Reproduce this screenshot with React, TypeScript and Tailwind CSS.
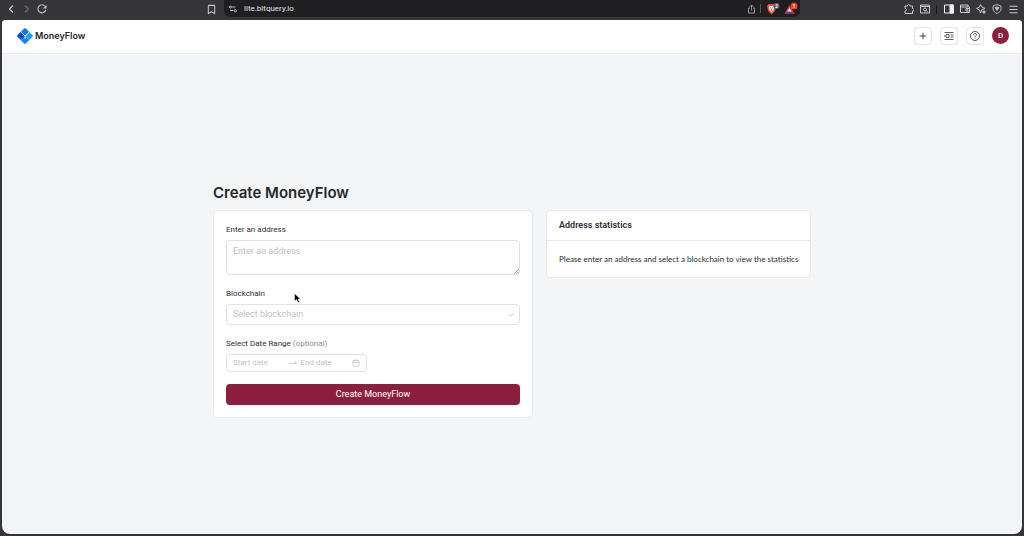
import { useState } from "react";
import type { ReactNode } from "react";
import { Bookmark, Calendar, ChevronDown, ChevronLeft, ChevronRight, Menu, Plus } from "lucide-react";

const Separator = ({ className = "" }: { className?: string }) => (
  <span className={`h-[9px] w-px ${className}`} />
);

const BrowserBar = () => {
  return <div className="grid grid-cols-[1fr_minmax(0,576px)_1fr] h-[19px] bg-[#363638] text-[#c9c9cb]">
    <div className="flex items-center pl-[5px] pr-[7px] pb-px gap-1">
      <button aria-label="Back"><ChevronLeft size={12} strokeWidth={2.6} /></button>
      <button aria-label="Forward" className="text-[#707073]"><ChevronRight size={12} strokeWidth={2.6} /></button>
      <button aria-label="Reload">
        <svg width="10" height="10" viewBox="0 0 20 20" fill="none" stroke="currentColor" strokeWidth="2.2">
          <path d="M17.500 12A8 8 0 1 1 16 4.500" />
          <path d="M19 2v7h-7z" fill="currentColor" stroke="none" />
        </svg>
      </button>
      <button aria-label="Bookmark" className="ml-auto"><Bookmark size={11} strokeWidth={2.2} /></button>
    </div>

    <div className="flex items-center h-[17px] mb-auto pl-1 pr-[2px] bg-[#1f1f21] rounded-b-md">
      <svg className="ml-px" width="8" height="8" viewBox="0 0 16 16" fill="none" stroke="currentColor" strokeWidth="1.8">
        <circle cx="3" cy="4" r="2" />
        <path d="M6 4h7M2 11h6" />
        <circle cx="12.500" cy="11.500" r="2.300" />
      </svg>
      <input
        aria-label="Address bar"
        className="flex-1 min-w-0 ml-[7px] bg-transparent outline-none text-[8px] leading-[12px] text-[#e4e4e6]"
        defaultValue="lite.bitquery.io"
      />
      <button aria-label="Share">
        <svg width="9" height="10" viewBox="0 0 18 20" fill="none" stroke="#a6a6a8" strokeWidth="1.800">
          <path d="M6 8H3v10h12V8h-3M9 13V2M5.500 5.500 9 2l3.500 3.500" />
        </svg>
      </button>
      <Separator className="mx-1 bg-[#59595c]" />
      <button aria-label="Shields" className="ml-px">
        <svg width="14" height="13" viewBox="0 0 28 26">
          <path d="M5 4h12l3 4-2 10-7 7-7-7-2-10z" fill="#f4512c" />
          <path d="m6 9 3-1h4l3 1-1 7-4 5-4-5z" fill="#fff" />
          <path d="m8 11 3 2 3-2M11 14v4" stroke="#f4512c" strokeWidth="1.600" fill="none" />
          <circle cx="21" cy="8" r="6" fill="#596273" />
          <text x="21" y="11.500" textAnchor="middle" fontSize="9" fontWeight="700" fill="#fff">2</text>
        </svg>
      </button>
      <button aria-label="Rewards" className="ml-1">
        <svg width="14" height="13" viewBox="0 0 28 26">
          <path d="M11 6 1 24h20z" fill="#e8442c" />
          <path d="m11 17-10 7h20z" fill="#6a3894" />
          <path d="m11 12-4 7h8z" fill="#fff" />
          <circle cx="20" cy="8" r="7" fill="#f23d2b" />
          <text x="20" y="11.500" textAnchor="middle" fontSize="10" fontWeight="700" fill="#fff">1</text>
        </svg>
      </button>
    </div>

    <div className="flex items-center justify-end gap-[6px] pr-[5px] pb-px">
      <button aria-label="Extensions">
        <svg width="10" height="10" viewBox="0 0 20 20" fill="none" stroke="currentColor" strokeWidth="2">
          <path d="M2 4h5c0-4 5-4 5 0h5v5c4 0 4 5 0 5v5H2v-5c4 0 4-5 0-5z" strokeLinejoin="round" />
        </svg>
      </button>
      <button aria-label="Search tabs">
        <svg width="10" height="10" viewBox="0 0 20 20" fill="none" stroke="currentColor" strokeWidth="2">
          <path d="M1 2h18v16H1zM1 5h18" />
          <circle cx="10" cy="11" r="3" />
          <path d="m12 13 3 3" />
        </svg>
      </button>
      <Separator className="bg-[#18181a] mr-px" />
      <button aria-label="Side panel">
        <svg width="10" height="10" viewBox="0 0 20 20" fill="none" stroke="#f0f0f0" strokeWidth="2">
          <path d="M1 2h18v16H1z" />
          <path d="M12 2h7v16h-7z" fill="#f0f0f0" />
        </svg>
      </button>
      <button aria-label="Wallet">
        <svg width="10" height="10" viewBox="0 0 20 20" fill="none" stroke="currentColor" strokeWidth="2">
          <path d="M16 6V2H1v15h18V6H1M19 9h-7v5h7" />
          <path d="M14 11.500h2" />
        </svg>
      </button>
      <button aria-label="Assistant">
        <svg width="10" height="10" viewBox="0 0 20 20" fill="none" stroke="currentColor" strokeWidth="2" strokeLinejoin="round">
          <path d="m9 1 3 5 6 3-6 2-3 7-2-6-6-3 6-3z" />
          <path d="m16 13 1 2 2 1-2 1-1 2-1-2-2-1 2-1z" fill="currentColor" />
        </svg>
      </button>
      <button aria-label="VPN">
        <svg width="10" height="10" viewBox="0 0 20 20" fill="none" stroke="currentColor" strokeWidth="1.800">
          <path d="M10 1 18 4v6c0 4-4 7-8 9-4-2-8-5-8-9V4z" />
          <path d="m5 7 5-2 5 2-5 7z" fill="currentColor" stroke="none" />
        </svg>
      </button>
      <button aria-label="Menu"><Menu size={11} strokeWidth={2.4} /></button>
    </div>
  </div>
};

const Logo = () => (
  <svg width="16" height="16" viewBox="0 0 48 48">
    <path d="M22 1q2-1 4 0l10 10-12 13L11 12z" fill="#1478f2" />
    <path d="M11 11 24 24v4L12 36 1 26q-1-2 0-4z" fill="#0a4fdc" />
    <path d="M36 11l11 11q1 2 0 4L36 37 24 24z" fill="#1da4fa" />
    <path d="M24 24l12 13-10 10q-2 1-4 0L11 36z" fill="#1583f5" />
    <path d="m11 11 13 13v9M24 24l12-11" fill="none" stroke="#fff" strokeWidth="2.600" />
  </svg>
);

const IconButton = ({ label, children }: { label: string; children: ReactNode }) => (
  <button aria-label={label} className="flex items-center justify-center size-[18px] border border-[#dfe2e7] rounded-[4px] bg-white text-[#333740]">
    {children}
  </button>
);

const AppBar = () => {
  return <header className="flex items-center justify-between h-[34px] pl-[15px] pr-[13px] pb-[2px] bg-white border-b border-[#e7eaee]">
    <a href="#" className="flex items-center gap-[2px] font-[Inter,sans-serif] text-[9px] leading-[14px] font-semibold text-[#22262b]">
      <Logo />
      MoneyFlow
    </a>
    <div className="flex items-center gap-2">
      <IconButton label="Create"><Plus size={10} strokeWidth={2.2} /></IconButton>
      <IconButton label="Saved flows">
        <svg width="10" height="8" viewBox="0 0 20 16" fill="none" stroke="currentColor" strokeWidth="1.600">
          <path d="M1 1h18M1 15h18M13 6h6M13 10h6M0 8h3" />
          <path d="M4 5h6v6H4z" />
        </svg>
      </IconButton>
      <IconButton label="Help">
        <svg width="10" height="10" viewBox="0 0 20 20" fill="none" stroke="currentColor" strokeWidth="1.700">
          <circle cx="10" cy="10" r="9" />
          <path d="M7 8c0-4 6-4 6-.5 0 2-3 2.500-3 4.500M10 13.500v2" />
        </svg>
      </IconButton>
      <button aria-label="Account" className="size-[17px] rounded-full bg-[#8c1f40] text-white text-[8px] font-medium leading-none">D</button>
    </div>
  </header>
};

const field = "w-full bg-white border border-[#dfe3e8] rounded-[4px] outline-none placeholder:text-[#bfc0c2]";
const label = "text-[8px] leading-[13px] text-[#2b2e33]";

const CreateForm = () => {
  const [chain, setChain] = useState("");

  return <form className="flex flex-col gap-3 p-3 bg-white border border-[#e7e9ed] rounded-[5px]" onSubmit={(e) => e.preventDefault()}>
    <div className="flex flex-col gap-1">
      <label htmlFor="address" className={label}>Enter an address</label>
      <div className="relative">
        <textarea id="address" placeholder="Enter an address" className={`${field} block h-[35px] px-[6px] py-1 text-[9px] leading-[13px] resize-none`} />
        <svg className="absolute right-px bottom-px" width="5" height="5" viewBox="0 0 10 10" stroke="#85878a" strokeWidth="1.600">
          <path d="M0 10 10 0M5 10l5-5" />
        </svg>
      </div>
    </div>

    <div className="flex flex-col gap-1">
      <label htmlFor="chain" className={label}>Blockchain</label>
      <div className="relative">
        <select
          id="chain"
          value={chain}
          onChange={(e) => setChain(e.target.value)}
          className={`${field} block h-[21px] px-[6px] text-[9px] leading-[13px] appearance-none ${chain ? "text-[#2b2e33]" : "text-[#bfc0c2]"}`}
        >
          <option value="">Select blockchain</option>
          <option value="bitcoin">Bitcoin</option>
          <option value="ethereum">Ethereum</option>
        </select>
        <ChevronDown size={10} className="absolute right-1 top-[6px] text-[#bfc0c2] pointer-events-none" />
      </div>
    </div>

    <div className="flex flex-col gap-1">
      <label htmlFor="start" className={label}>Select Date Range <span className="text-[#8b8d91]">(optional)</span></label>
      <div className={`${field} flex items-center max-w-[141px] h-[18px] px-[6px] text-[8px] leading-[12px] text-[#bfc0c2]`}>
        <input id="start" placeholder="Start date" className="flex-1 min-w-0 outline-none placeholder:text-[#bfc0c2]" />
        <svg className="mx-1" width="8" height="8" viewBox="0 0 16 16" fill="none" stroke="currentColor" strokeWidth="1.600">
          <path d="M0 9h15l-5-5" />
        </svg>
        <input aria-label="End date" placeholder="End date" className="flex-1 min-w-0 outline-none placeholder:text-[#bfc0c2]" />
        <Calendar size={8} className="shrink-0" />
      </div>
    </div>

    <button className="h-[21px] rounded-[4px] bg-[#8c1f40] text-white text-[9px] leading-[13px]">Create MoneyFlow</button>
  </form>
};

const AddressStatistics = () => {
  return <section className="bg-white border border-[#e7e9ed] rounded-[5px] text-[#2b2e33]">
    <h2 className="px-3 py-2 text-[9px] leading-[13px] font-semibold border-b border-[#e7e9ed]">Address statistics</h2>
    <p className="pl-3 pr-1 py-3 font-[Lato,sans-serif] text-[8px] leading-[12px]">Please enter an address and select a blockchain to view the statistics</p>
  </section>
};

// mouse pointer resting over the form
const Pointer = () => (
  <svg className="absolute left-[81px] top-[83px] pointer-events-none" width="7" height="10" viewBox="0 0 14 20">
    <path d="M1 1v15l4-3 3 6 3-1-3-6h5z" fill="#000" stroke="#fff" strokeWidth="1" />
  </svg>
);

export default function App() {
  return (
    <div className="flex flex-col min-h-screen bg-[#363638] font-[Roboto,sans-serif]">
      <BrowserBar />
      <div className="flex flex-col flex-1 mx-[2px] mt-px mb-[2px] bg-[#f4f5f7] rounded-t-[4px] rounded-b-[8px] overflow-hidden">
        <AppBar />
        <main className="flex flex-col flex-1 items-center justify-center px-4 pt-[13px]">
          <div className="w-full max-w-[598px]">
            <h1 className="mb-[7px] font-[Inter,sans-serif] text-[15px] leading-[20px] font-semibold text-[#24272b]">Create MoneyFlow</h1>
            <div className="grid grid-cols-[320fr_265fr] items-start gap-[13px]">
              <div className="relative">
                <CreateForm />
                <Pointer />
              </div>
              <AddressStatistics />
            </div>
          </div>
        </main>
      </div>
    </div>
  );
}
